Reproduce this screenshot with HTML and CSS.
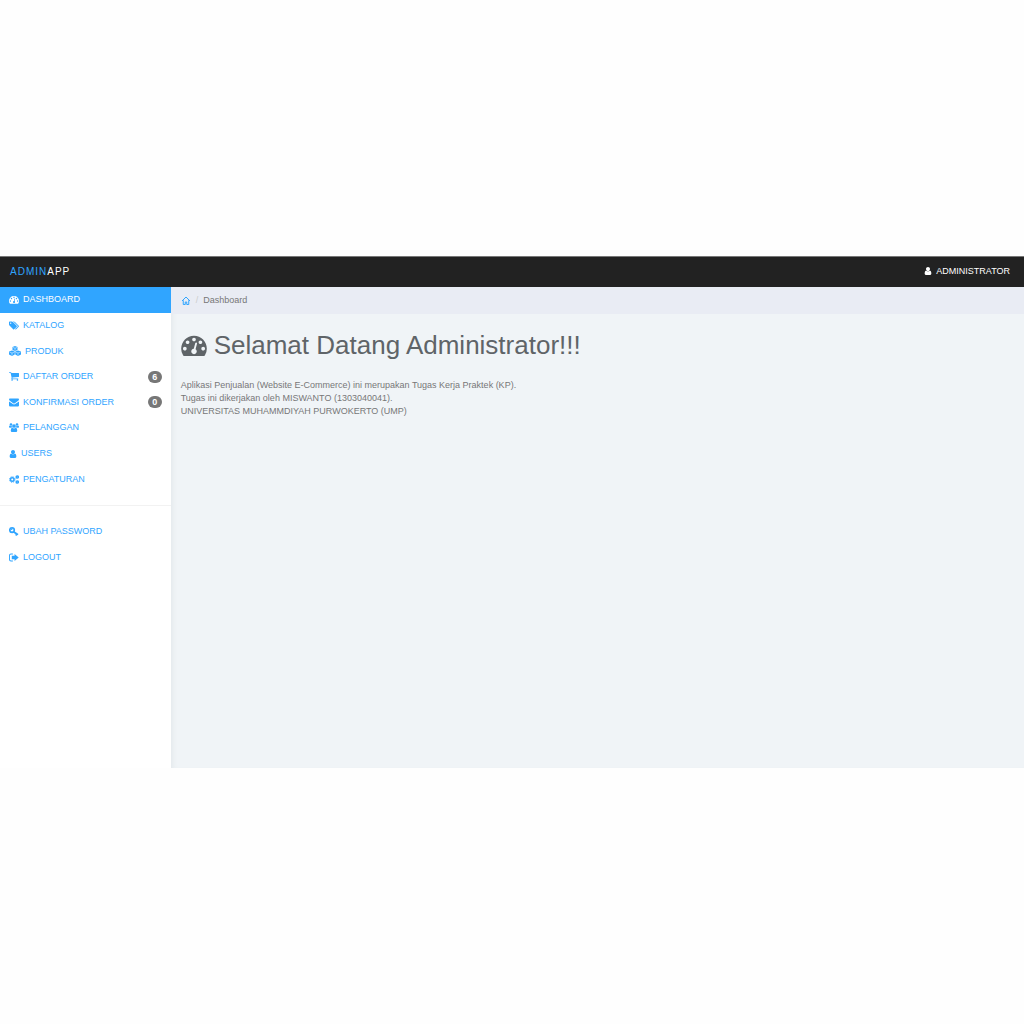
FILE: index.html
```html
<!DOCTYPE html>
<html lang="id">
<head>
    <meta charset="UTF-8">
    <meta name="viewport" content="width=device-width, initial-scale=1.0">
    <title>Admin App</title>
    <link rel="stylesheet" href="styles.css">
</head>
<body>
    <!-- icon yang dipakai lebih dari sekali -->
    <svg class="sprite" aria-hidden="true">
        <symbol id="icon-dashboard" viewBox="0 128 1792 1536">
            <path d="M384 1152q0-53-37.500-90.500t-90.500-37.500-90.500 37.500-37.500 90.500 37.500 90.500 90.500 37.500 90.500-37.500 37.500-90.500zm192-448q0-53-37.500-90.500t-90.500-37.500-90.500 37.500-37.500 90.500 37.500 90.500 90.500 37.500 90.500-37.500 37.500-90.500zm428 481l101-382q6-26-7.500-48.500t-38.500-29.500-48 6.500-30 39.500l-101 382q-60 5-107 43.500t-63 98.500q-20 77 20 146t117 89 146-20 89-117q16-60-6-117t-72-91zm660-33q0-53-37.500-90.500t-90.500-37.500-90.500 37.500-37.500 90.500 37.500 90.500 90.500 37.500 90.500-37.500 37.500-90.500zm-640-640q0-53-37.500-90.500t-90.500-37.500-90.500 37.500-37.500 90.500 37.500 90.500 90.500 37.500 90.500-37.500 37.500-90.500zm448 192q0-53-37.500-90.500t-90.500-37.500-90.500 37.500-37.500 90.500 37.500 90.500 90.500 37.500 90.500-37.500 37.500-90.500zm320 448q0 261-141 483-19 29-54 29h-1402q-35 0-54-29-141-221-141-483 0-182 71-348t191-286 286-191 348-71 348 71 286 191 191 286 71 348z"/>
        </symbol>
        <symbol id="icon-user" viewBox="256 128 1280 1536">
            <path d="M1536 1399q0 109-62.500 187t-150.500 78h-854q-88 0-150.500-78t-62.500-187q0-85 8.500-160.500t31.500-152 58.500-131 94-89 134.500-34.500q131 128 313 128t313-128q76 0 134.500 34.500t94 89 58.500 131 31.500 152 8.500 160.500zm-256-887q0 159-112.500 271.500t-271.500 112.500-271.500-112.500-112.500-271.500 112.500-271.500 271.500-112.500 271.500 112.500 112.500 271.500z"/>
        </symbol>
    </svg>

    <div class="app">
        <header class="navbar">
            <a class="brand" href="#"><span>Admin</span>App</a>
            <a class="account" href="#">
                <svg class="icon icon-small"><use href="#icon-user"/></svg>Administrator
            </a>
        </header>

        <nav class="sidebar">
            <ul class="menu menu-main">
                <li><a class="active" href="#"><svg class="icon"><use href="#icon-dashboard"/></svg>Dashboard</a></li>
                <li><a href="#"><svg class="icon" viewBox="0 128 1920 1536"><path d="M448 448q0-53-37.500-90.500t-90.500-37.500-90.500 37.500-37.500 90.500 37.500 90.500 90.500 37.500 90.500-37.500 37.500-90.500zm1067 576q0 53-37 90l-491 492q-39 37-91 37-53 0-90-37l-715-716q-38-37-64.500-101t-26.500-117v-416q0-52 38-90t90-38h416q53 0 117 26.500t102 64.500l715 714q37 39 37 91zm384 0q0 53-37 90l-491 492q-39 37-91 37-36 0-59-14t-53-45l470-470q37-37 37-90 0-52-37-91l-715-714q-38-38-102-64.500t-117-26.500h224q53 0 117 26.500t102 64.500l715 714q37 39 37 91z"/></svg>Katalog</a></li>
                <li><a href="#"><svg class="icon icon-wide" viewBox="0 0 24 20"><path d="M12 0l5 2v6l-5 2-5-2V2zM6 9l5.500 2v6L6 20l-6-3v-6zM18 9l6 2v6l-6 3-5.500-3v-6z"/><path class="cut" d="M8 3l4 1.500L16 3M12 4.500V9M1 12l5 2 5-2M6 14v5M13 12l5 2 5-2M18 14v5"/></svg>Produk</a></li>
                <li><a href="#"><svg class="icon" viewBox="64 256 1664 1408"><path d="M704 1536q0 52-38 90t-90 38-90-38-38-90 38-90 90-38 90 38 38 90zm896 0q0 52-38 90t-90 38-90-38-38-90 38-90 90-38 90 38 38 90zm128-1088v512q0 24-16.500 42.500t-40.500 21.500l-1044 122q13 60 13 70 0 16-24 64h920q26 0 45 19t19 45-19 45-45 19h-1024q-26 0-45-19t-19-45q0-11 8-31.500t16-36 21.500-40 15.500-29.500l-177-823h-204q-26 0-45-19t-19-45 19-45 45-19h256q16 0 28.500 6.500t19.500 15.500 13 24.500 8 26 5.500 29.500 4.500 26h1201q26 0 45 19t19 45z"/></svg>Daftar Order <span class="badge">6</span></a></li>
                <li><a href="#"><svg class="icon" viewBox="0 1 18 16"><path d="M1.500 2h15Q18 2 18 3.500 18 5 16 6.500L10.500 10.300Q9 11.300 7.500 10.300L2 6.500Q0 5 0 3.500 0 2 1.500 2zM0 7l7 4.800q2 1.300 4 0L18 7v7.500q0 1.500-1.500 1.500h-15Q0 16 0 14.500z"/></svg>Konfirmasi Order <span class="badge">0</span></a></li>
                <li><a href="#"><svg class="icon" viewBox="0 0 20 18"><circle cx="4" cy="3" r="2.600"/><circle cx="16" cy="3" r="2.600"/><circle cx="10" cy="6" r="3.700"/><path d="M5.500 9Q4 9 3 9.500H1.500Q0 9.500 0 8q0-3 1.200-3Q4 7.200 6 6q0 1.800 1 3zM14.500 9q1.500 0 2.500.500h1.500Q20 9.500 20 8q0-3-1.200-3-2.800 2.200-4.800 1 0 1.800-1 3zM6.500 9.500Q10 12 13.500 9.500q3 0 3 5.500 0 3-2.500 3H6q-2.500 0-2.500-3 0-5.500 3-5.500z"/></svg>Pelanggan</a></li>
                <li><a href="#"><svg class="icon icon-small"><use href="#icon-user"/></svg>Users</a></li>
                <li><a href="#"><svg class="icon" viewBox="0 0 20 18"><circle class="gear" cx="6.500" cy="9" r="3.500"/><circle class="gear-teeth" cx="6.500" cy="9" r="5.600"/><circle class="gear-mini" cx="16.500" cy="4" r="2.200"/><circle class="gear-mini" cx="16.500" cy="14" r="2.200"/></svg>Pengaturan</a></li>
            </ul>
            <hr>
            <ul class="menu menu-user">
                <li><a href="#"><svg class="icon" viewBox="1 1 17 16"><circle class="key-ring" cx="6" cy="6.500" r="4"/><path d="M9 7.500l8.500 6-1.500 2-1.500-.5-.5 2.500-1.500-1-.5-2.500-5-4z"/><path d="M3 6.500L6.500 3v3.500z"/></svg>Ubah Password</a></li>
                <li><a href="#"><svg class="icon" viewBox="0 1 18 16"><path d="M7 2v1.500H4Q1.700 3.500 1.700 5.500v7q0 2 2.300 2h3V16H3.500Q0 16 0 12.500v-7Q0 2 3.500 2zM10 2.500l7.500 6.500-7.500 6.500V12H5V6h5z"/></svg>Logout</a></li>
            </ul>
        </nav>

        <main class="content">
            <ol class="breadcrumb">
                <li><a href="#" aria-label="Home"><svg class="icon home" viewBox="0 0 18 18"><path d="M1 10l8-8 8 8M3.500 8.500V17h4v-5h3v5h4V8.500"/></svg></a></li>
                <li>Dashboard</li>
            </ol>
            <div class="page">
                <h1><svg class="icon"><use href="#icon-dashboard"/></svg>Selamat Datang Administrator!!!</h1>
                <p>
                    Aplikasi Penjualan (Website E-Commerce) ini merupakan Tugas Kerja Praktek (KP).<br>
                    Tugas ini dikerjakan oleh MISWANTO (1303040041).<br>
                    UNIVERSITAS MUHAMMDIYAH PURWOKERTO (UMP)
                </p>
            </div>
        </main>
    </div>
</body>
</html>
```
FILE: styles.css
```css
* {
    box-sizing: border-box;
}
body {
    margin: 0;
    min-height: 100vh;
    display: flex;
    align-items: center;
    background-color: #fefefe;
    font-family: "Liberation Sans", Arial, sans-serif;
    font-size: 9px;
    line-height: 13px;
    color: #777;
}
a {
    color: #30a5ff;
    text-decoration: none;
}
ul, ol {
    list-style: none;
    margin: 0;
    padding: 0;
}
.sprite {
    position: absolute;
    width: 0;
    height: 0;
}
.app {
    width: 100%;
    min-height: 50vh;
    display: grid;
    grid-template-columns: 1fr 5fr;
    grid-template-rows: auto 1fr;
}

/* icon */
.icon {
    width: 10px;
    height: 9px;
    margin-right: 4px;
    flex: none;
    fill: currentColor;
}
.icon-small {
    width: 8px;
    height: 8px;
}
.icon-wide {
    width: 12px;
    height: 10px;
}
.cut {
    fill: none;
    stroke: #fff;
    stroke-width: 1;
}
.gear, .gear-teeth, .gear-mini, .key-ring {
    fill: none;
    stroke: currentColor;
    stroke-width: 3;
}
.gear-teeth {
    stroke-width: 2;
    stroke-dasharray: 2.2;
}
.gear-mini {
    stroke-width: 3;
}

/* navbar */
.navbar {
    grid-column: 1 / -1;
    height: 31px;
    padding: 0 14px 2px 10px;
    display: flex;
    align-items: center;
    justify-content: space-between;
    background-color: #222;
    border-top: 1px solid #777;
    text-transform: uppercase;
}
.brand {
    color: #fff;
    font-size: 10px;
    letter-spacing: 1px;
}
.brand span {
    color: #30a5ff;
}
.account {
    display: flex;
    align-items: center;
    color: #fff;
}

/* sidebar */
.sidebar {
    background-color: #fff;
}
.menu {
    display: grid;
    grid-auto-rows: 1fr;
}
.menu-main {
    height: 205px;
}
.menu-user {
    height: 51px;
}
.menu a {
    height: 100%;
    padding: 0 9px;
    display: flex;
    align-items: center;
    text-transform: uppercase;
}
.menu .active {
    background-color: #30a5ff;
    color: #fff;
}
.badge {
    margin-left: auto;
    min-width: 14px;
    padding: 0 4px;
    border-radius: 6px;
    background-color: #777;
    color: #fff;
    font-size: 9px;
    font-weight: bold;
    line-height: 12px;
    text-align: center;
}
.sidebar hr {
    margin: 13px 0;
    border: 0;
    border-top: 1px solid #f2f2f2;
}

/* content */
.content {
    background-color: #f0f4f7;
    box-shadow: inset 5px 0 5px -3px #e4e9ec;
}
.breadcrumb {
    display: flex;
    align-items: center;
    height: 27px;
    padding: 0 10px;
    background-color: #e9ecf4;
}
.breadcrumb li {
    display: flex;
}
.breadcrumb li + li::before {
    content: "/";
    padding: 0 5px;
    color: #ccc;
}
.breadcrumb a {
    display: flex;
}
.home {
    margin-right: 0;
    fill: none;
    stroke: currentColor;
    stroke-width: 2;
}
.page {
    padding: 15px 10px;
}
h1 {
    display: flex;
    align-items: center;
    margin: 0 0 18px;
    font-size: 26px;
    font-weight: normal;
    line-height: 32px;
    color: #5f6468;
}
h1 .icon {
    width: 26px;
    height: 22px;
    margin-right: 7px;
}
p {
    margin: 0;
}
```
